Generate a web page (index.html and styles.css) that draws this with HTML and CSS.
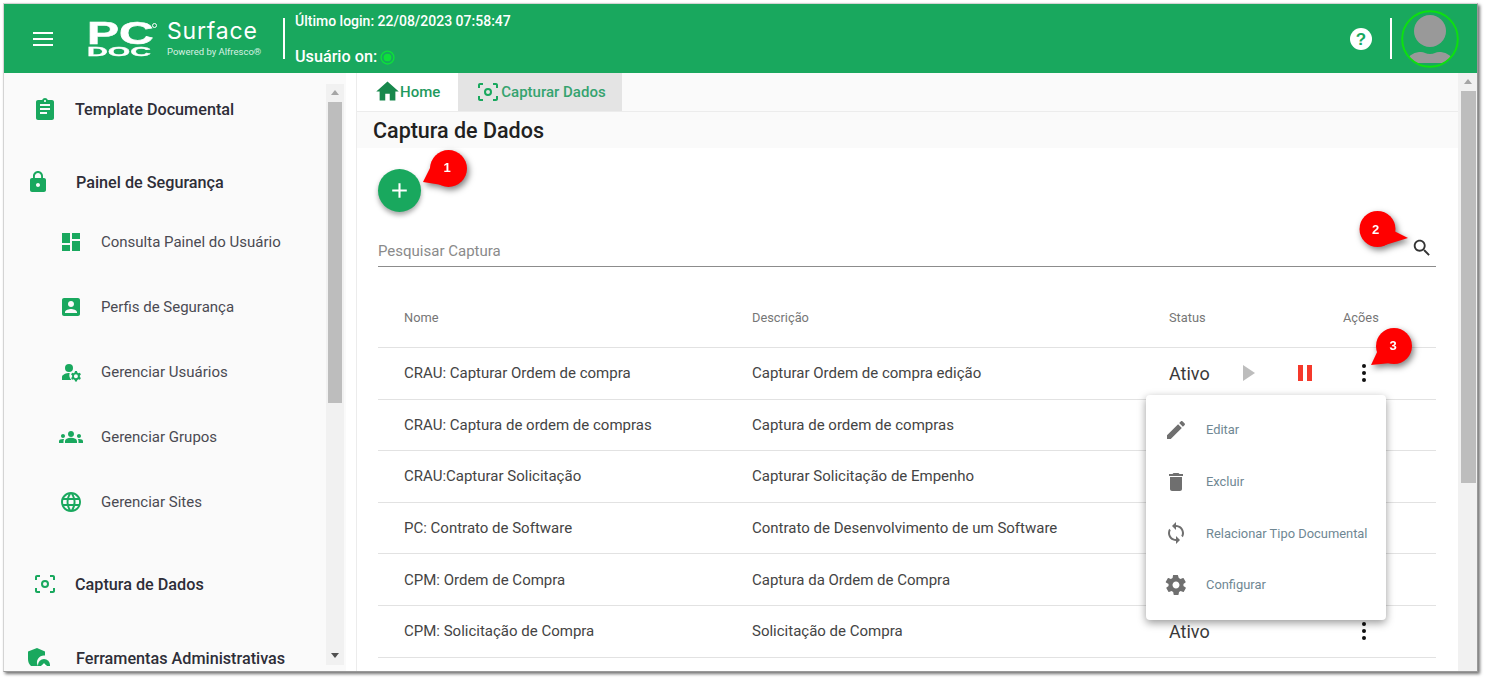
FILE: index.html
```html
<!DOCTYPE html>
<html lang="pt">
<head>
<meta charset="utf-8">
<title>Captura de Dados</title>
<link rel="stylesheet" href="styles.css">
</head>
<body>
<div class="frame">
  <header class="topbar">
    <svg class="burger" viewBox="0 0 20 14"><path d="M0 1h20M0 7h20M0 13h20" stroke="#fff" stroke-width="2"/></svg>
    <div class="logo">
      <div class="logo-pc"><span class="pc">PC</span><span class="doc">DOC</span><i class="reg"></i></div>
      <div class="logo-surface"><span class="surface">Surface</span><span class="powered">Powered by Alfresco®</span></div>
    </div>
    <div class="vsep"></div>
    <div class="session">
      <div class="login">Último login: 22/08/2023 07:58:47</div>
      <div class="online">Usuário on: <svg class="dot" viewBox="0 0 14 14"><circle cx="7" cy="7" r="6" fill="none" stroke="#0de03a" stroke-width="1.300"/><circle cx="7" cy="7" r="3.600" fill="#0de03a"/></svg></div>
    </div>
    <div class="spacer"></div>
    <svg class="help" viewBox="0 0 24 24"><circle cx="12" cy="12" r="11" fill="#fff"/><text x="12" y="18" text-anchor="middle" class="help-q">?</text></svg>
    <div class="vsep right"></div>
    <div class="avatar">
      <svg viewBox="0 0 58 58"><clipPath id="ac"><circle cx="29" cy="29" r="27.500"/></clipPath><g clip-path="url(#ac)" fill="#999"><circle cx="29" cy="21" r="16"/><path d="M5 53c2-9 10-11 15-11 3 0 5 2 9 2s6-2 9-2c5 0 13 2 15 11z"/></g><circle cx="29" cy="29" r="27.800" fill="none" stroke="#0de010" stroke-width="2"/></svg>
    </div>
  </header>
  <div class="body">
    <aside class="sidebar">
      <nav class="nav">
        <a class="nav-main first"><svg class="ic" viewBox="0 0 24 24"><path d="M19 3h-4.200C14.400 1.800 13.300 1 12 1s-2.400.8-2.800 2H5c-1.100 0-2 .9-2 2v16c0 1.100.9 2 2 2h14c1.100 0 2-.9 2-2V5c0-1.100-.9-2-2-2zm-7 0c.6 0 1 .4 1 1s-.4 1-1 1-1-.4-1-1 .4-1 1-1zm2 14H7v-2h7v2zm3-4H7v-2h10v2zm0-4H7V7h10v2z"/></svg><span>Template Documental</span></a>
        <a class="nav-main second"><svg class="ic lock" viewBox="0 0 24 24"><path d="M18 8h-1V6c0-2.800-2.200-5-5-5S7 3.200 7 6v2H6c-1.100 0-2 .9-2 2v10c0 1.100.9 2 2 2h12c1.100 0 2-.9 2-2V10c0-1.100-.9-2-2-2zm-6 9c-1.100 0-2-.9-2-2s.9-2 2-2 2 .9 2 2-.9 2-2 2zm3.100-9H8.900V6c0-1.700 1.400-3.100 3.100-3.100s3.100 1.400 3.100 3.100v2z"/></svg><span>Painel de Segurança</span></a>
        <a class="nav-sub sub-first"><svg class="ic" viewBox="0 0 24 24"><path d="M3 13h8V3H3v10zm0 8h8v-6H3v6zm10 0h8V11h-8v10zm0-18v6h8V3h-8z"/></svg><span>Consulta Painel do Usuário</span></a>
        <a class="nav-sub"><svg class="ic" viewBox="0 0 24 24"><path d="M3 5v14c0 1.100.9 2 2 2h14c1.100 0 2-.9 2-2V5c0-1.100-.9-2-2-2H5c-1.100 0-2 .9-2 2zm12 4c0 1.700-1.300 3-3 3s-3-1.300-3-3 1.300-3 3-3 3 1.300 3 3zm-9 8c0-2 4-3.100 6-3.100s6 1.100 6 3.100v1H6v-1z"/></svg><span>Perfis de Segurança</span></a>
        <a class="nav-sub"><svg class="ic" viewBox="0 0 24 24"><circle cx="10" cy="8" r="4"/><path d="M10.700 13C7.700 12.900 3 14.400 3 17v3h9.500a6.700 6.700 0 0 1-1.800-7z"/><path d="M20.800 17c0-.2.100-.4.100-.7s0-.5-.1-.7l1.100-1-1-1.800-1.500.5a5 5 0 0 0-1.200-.7l-.2-1.500h-2l-.3 1.500c-.4.200-.8.400-1.200.7l-1.400-.5-1 1.800 1.100 1c0 .2-.1.400-.1.700s0 .5.100.7l-1.100 1 1 1.800 1.400-.5c.4.300.8.500 1.200.7l.3 1.500h2l.2-1.500c.5-.2.900-.4 1.200-.7l1.500.5 1-1.800-1.100-1zM16.900 18.300a2 2 0 1 1 0-4 2 2 0 0 1 0 4z"/></svg><span>Gerenciar Usuários</span></a>
        <a class="nav-sub"><svg class="ic" viewBox="0 0 24 24"><path d="M12 12.800c1.600 0 3.100.4 4.300.9 1.100.5 1.700 1.600 1.700 2.700V18H6v-1.600c0-1.200.7-2.200 1.700-2.700 1.200-.5 2.700-.9 4.300-.9zM4 13c1.100 0 2-.9 2-2s-.9-2-2-2-2 .9-2 2 .9 2 2 2zm1.100 1.100c-.4-.1-.7-.1-1.100-.1-1 0-1.900.2-2.800.6C.5 14.900 0 15.600 0 16.400V18h4.500v-1.600c0-.8.200-1.600.6-2.300zM20 13c1.100 0 2-.9 2-2s-.9-2-2-2-2 .9-2 2 .9 2 2 2zm4 3.400c0-.8-.5-1.500-1.200-1.800-.9-.4-1.800-.6-2.800-.6-.4 0-.8 0-1.100.1.400.7.600 1.500.6 2.300V18H24v-1.600zM12 6c1.700 0 3 1.300 3 3s-1.300 3-3 3-3-1.300-3-3 1.300-3 3-3z"/></svg><span>Gerenciar Grupos</span></a>
        <a class="nav-sub"><svg class="ic" viewBox="0 0 24 24"><path d="M12 2C6.500 2 2 6.500 2 12s4.500 10 10 10 10-4.500 10-10S17.500 2 12 2zm6.900 6h-3c-.3-1.300-.8-2.400-1.400-3.600 1.800.6 3.400 1.900 4.400 3.600zM12 4c.8 1.200 1.500 2.500 1.900 4h-3.800c.4-1.500 1.100-2.800 1.900-4zM4.300 14c-.2-.6-.3-1.300-.3-2s.1-1.400.3-2h3.400c-.1.700-.1 1.300-.1 2s.1 1.300.1 2H4.300zm.8 2h3c.3 1.300.8 2.400 1.400 3.600-1.800-.6-3.400-1.900-4.400-3.600zm3-8h-3c1-1.700 2.600-3 4.400-3.600C8.900 5.600 8.400 6.700 8.100 8zM12 20c-.8-1.200-1.500-2.500-1.900-4h3.800c-.4 1.500-1.100 2.800-1.900 4zm2.300-6H9.700c-.1-.7-.2-1.300-.2-2s.1-1.300.2-2h4.700c.1.700.2 1.300.2 2s-.2 1.300-.3 2zm.3 5.600c.6-1.100 1.100-2.300 1.400-3.600h3c-1 1.700-2.600 3-4.400 3.600zm1.800-5.600c.1-.7.100-1.300.1-2s-.1-1.300-.1-2h3.400c.2.600.3 1.300.3 2s-.1 1.400-.3 2h-3.400z"/></svg><span>Gerenciar Sites</span></a>
        <a class="nav-main third"><svg class="ic" viewBox="0 0 24 24"><path d="M7 3H4c-1.100 0-2 .9-2 2v3h2V5h3V3zm13 0h-3v2h3v3h2V5c0-1.100-.9-2-2-2zM4 16H2v3c0 1.100.9 2 2 2h3v-2H4v-3zm16 3h-3v2h3c1.100 0 2-.9 2-2v-3h-2v3zM12 8a4 4 0 1 0 0 8 4 4 0 0 0 0-8zm0 6a2 2 0 1 1 0-4 2 2 0 0 1 0 4z"/></svg><span>Captura de Dados</span></a>
        <a class="nav-main fourth"><svg class="ic shield" viewBox="0 0 24 18"><path d="M11 0 2 3.500V11c0 3 1 5 3 7h7a7 7 0 0 1 7-10.500V3.500z"/><circle cx="18" cy="17" r="6"/><path d="M15.500 17h5v2h-5zM16.500 17c0-2 3-2 3 0" fill="#fff"/></svg><span>Ferramentas Administrativas</span></a>
      </nav>
      <div class="scroll side-scroll"><span class="arrow up"></span><span class="thumb"></span><span class="arrow down"></span></div>
    </aside>
    <main class="main">
      <div class="content">
        <div class="tabs">
          <a class="tab"><svg class="tab-ic home" viewBox="0 0 24 24"><path d="M10 20v-6h4v6h5v-8h3L12 3 2 12h3v8z"/></svg>Home</a>
          <a class="tab active"><svg class="tab-ic" viewBox="0 0 24 24"><path d="M7 3H4c-1.100 0-2 .9-2 2v3h2V5h3V3zm13 0h-3v2h3v3h2V5c0-1.100-.9-2-2-2zM4 16H2v3c0 1.100.9 2 2 2h3v-2H4v-3zm16 3h-3v2h3c1.100 0 2-.9 2-2v-3h-2v3zM12 8a4 4 0 1 0 0 8 4 4 0 0 0 0-8zm0 6a2 2 0 1 1 0-4 2 2 0 0 1 0 4z"/></svg>Capturar Dados</a>
        </div>
        <h1 class="title">Captura de Dados</h1>
        <div class="panel">
          <button class="fab"><svg viewBox="0 0 24 24"><path d="M19 13h-6v6h-2v-6H5v-2h6V5h2v6h6v2z" fill="#fff"/></svg></button>
          <div class="search">
            <span>Pesquisar Captura</span>
            <svg class="search-ic" viewBox="0 0 24 24"><path d="M15.500 14h-.8l-.3-.3c1-1.100 1.600-2.600 1.600-4.200C16 5.900 13.100 3 9.500 3S3 5.900 3 9.500 5.900 16 9.500 16c1.600 0 3.100-.6 4.200-1.600l.3.300v.8l5 5 1.500-1.500-5-5zm-6 0C7 14 5 12 5 9.500S7 5 9.500 5 14 7 14 9.500 12 14 9.500 14z"/></svg>
          </div>
          <div class="table">
            <div class="row head"><span>Nome</span><span>Descrição</span><span>Status</span><span>Ações</span></div>
            <div class="row"><span>CRAU: Capturar Ordem de compra</span><span>Capturar Ordem de compra edição</span><span class="status">Ativo
              <svg class="play" viewBox="0 0 12 16"><path d="M0 0l12 8-12 8z"/></svg>
              <svg class="pause" viewBox="0 0 14 16"><path d="M0 0h5v16H0zM9 0h5v16H9z"/></svg></span>
              <span class="acts"><svg class="kebab" viewBox="0 0 6 20"><circle cx="3" cy="3" r="2"/><circle cx="3" cy="10" r="2"/><circle cx="3" cy="17" r="2"/></svg></span></div>
            <div class="row"><span>CRAU: Captura de ordem de compras</span><span>Captura de ordem de compras</span><span></span><span></span></div>
            <div class="row"><span>CRAU:Capturar Solicitação</span><span>Capturar Solicitação de Empenho</span><span></span><span></span></div>
            <div class="row"><span>PC: Contrato de Software</span><span>Contrato de Desenvolvimento de um Software</span><span></span><span></span></div>
            <div class="row"><span>CPM: Ordem de Compra</span><span>Captura da Ordem de Compra</span><span></span><span></span></div>
            <div class="row"><span>CPM: Solicitação de Compra</span><span>Solicitação de Compra</span><span class="status">Ativo</span>
              <span class="acts"><svg class="kebab" viewBox="0 0 6 20"><circle cx="3" cy="3" r="2"/><circle cx="3" cy="10" r="2"/><circle cx="3" cy="17" r="2"/></svg></span></div>
          </div>
        </div>
      </div>
      <div class="scroll main-scroll"><span class="arrow up"></span><span class="thumb"></span></div>
    </main>
  </div>
</div>

<div class="menu">
  <div class="menu-item"><svg viewBox="0 0 24 24"><path d="M3 17.250V21h3.750L17.800 9.900l-3.700-3.700L3 17.250zM20.700 7c.4-.4.4-1 0-1.400l-2.300-2.300c-.4-.4-1-.4-1.400 0l-1.800 1.800 3.700 3.700L20.700 7z"/></svg><span>Editar</span></div>
  <div class="menu-item"><svg viewBox="0 0 24 24"><path d="M6 19c0 1.100.9 2 2 2h8c1.100 0 2-.9 2-2V7H6v12zM19 4h-3.500l-1-1h-5l-1 1H5v2h14V4z"/></svg><span>Excluir</span></div>
  <div class="menu-item"><svg viewBox="0 0 24 24"><path d="M12 4V1L8 5l4 4V6c3.300 0 6 2.700 6 6 0 1-.3 2-.7 2.800l1.500 1.500C19.500 15 20 13.600 20 12c0-4.400-3.600-8-8-8zm0 14c-3.300 0-6-2.700-6-6 0-1 .3-2 .7-2.800L5.200 7.700C4.500 9 4 10.400 4 12c0 4.400 3.600 8 8 8v3l4-4-4-4v3z"/></svg><span>Relacionar Tipo Documental</span></div>
  <div class="menu-item"><svg viewBox="0 0 24 24"><path d="M19.400 13c0-.3.100-.6.100-1s0-.7-.1-1l2.100-1.600c.2-.2.200-.4.100-.6l-2-3.500c-.1-.2-.4-.3-.6-.2l-2.500 1c-.5-.4-1.100-.7-1.700-1L14 2.400c0-.2-.2-.4-.5-.4h-4c-.3 0-.5.2-.5.400l-.4 2.700c-.6.200-1.100.6-1.700 1l-2.500-1c-.2-.1-.5 0-.6.200l-2 3.500c-.1.200-.1.500.1.600L4.600 11c0 .3-.1.600-.1 1s0 .7.100 1l-2.100 1.600c-.2.200-.2.400-.1.600l2 3.500c.1.200.4.300.6.200l2.500-1c.5.400 1.100.7 1.700 1l.4 2.700c0 .2.200.4.500.4h4c.3 0 .5-.2.500-.4l.4-2.700c.6-.2 1.100-.6 1.700-1l2.500 1c.2.100.5 0 .6-.2l2-3.500c.1-.2.100-.5-.1-.6L19.400 13zM12 15.500c-1.900 0-3.500-1.600-3.500-3.500s1.600-3.500 3.500-3.500 3.500 1.600 3.500 3.500-1.600 3.500-3.500 3.500z"/></svg><span>Configurar</span></div>
</div>

<svg class="callout c1" viewBox="0 0 50 42"><circle cx="28.500" cy="20.500" r="18.500"/><path d="M3 34 13 14 22 37z"/><text x="27" y="24" text-anchor="middle">1</text></svg>
<svg class="callout c2" viewBox="0 0 56 44"><circle cx="22.500" cy="21" r="18"/><path d="M37 22 53 30 27 38z"/><text x="20.500" y="26" text-anchor="middle">2</text></svg>
<svg class="callout c3" viewBox="0 0 50 46"><circle cx="28" cy="22" r="18"/><path d="M13 24 5 41 25 39z"/><text x="27" y="26" text-anchor="middle">3</text></svg>
</body>
</html>
```
FILE: styles.css
```css
* { box-sizing: border-box; }
html, body { margin: 0; height: 100%; background: #fff; overflow: hidden; }
body { font-family: Roboto, "Liberation Sans", sans-serif; color: #333; position: relative; }
a { text-decoration: none; color: inherit; }

.frame {
  width: 1475px; height: 669px; margin: 3px 0 0 3px;
  border: 1px solid #d4d4d4; border-right-color: #999; border-bottom-color: #999;
  box-shadow: 2px 2px 3px rgba(0,0,0,.55);
  display: flex; flex-direction: column; overflow: hidden; background: #fff;
}
.topbar {
  height: 69px; flex: none; background: #19a85e; color: #fff;
  display: flex; align-items: center; padding: 0 18px 0 29px;
}
.burger { width: 20px; height: 14px; flex: none; margin-right: 34px; }
.logo { display: flex; align-items: flex-start; align-self: flex-start; width: 196px; }
.logo-pc { width: 80px; padding-top: 17px; display: flex; flex-direction: column; font-family: "Liberation Sans", sans-serif; font-weight: 700; color: #fff; align-items: flex-start; position: relative; }
.pc { font-size: 32px; line-height: 24px; transform: scaleX(1.5); transform-origin: left; -webkit-text-stroke: .6px #fff; }
.doc { font-size: 12px; line-height: 12px; margin-top: 1px; transform: scaleX(2.4); transform-origin: left; -webkit-text-stroke: .3px #fff; }
.reg { position: absolute; left: 65px; top: 19px; width: 5px; height: 5px; border: 1px solid #fff; border-radius: 50%; }
.logo-surface { display: flex; flex-direction: column; padding-top: 14px; }
.surface { font-family: Inter, Lato, sans-serif; font-size: 23px; line-height: 26px; font-weight: 400; letter-spacing: .8px; }
.powered { font-size: 9.500px; line-height: 12px; margin-top: 2px; color: #d8f1e4; white-space: nowrap; }
.vsep { width: 2px; height: 41px; background: #fff; flex: none; margin-right: 10px; }
.session { font-weight: 500; align-self: flex-start; padding-top: 8px; }
.login { line-height: 18px; font-size: 14px; }
.online { line-height: 20px; margin-top: 17px; font-size: 16.200px; display: flex; align-items: center; gap: 3px; }
.dot { width: 15px; height: 15px; }
.spacer { flex: 1; }
.help { width: 24px; height: 24px; margin-right: 17px; }
.help-q { font: 700 17px "Liberation Sans", sans-serif; fill: #19a85e; }
.vsep.right { margin-right: 9px; }
.avatar { width: 58px; height: 58px; flex: none; }
.avatar svg { width: 58px; height: 58px; display: block; }

.body { flex: 1; display: flex; min-height: 0; }
.sidebar { width: 342px; flex: none; background: #fafafa; display: flex; padding-right: 2px; overflow: hidden; }
.nav { flex: 1; display: flex; flex-direction: column; min-width: 0; overflow: hidden; }
.nav-main, .nav-sub { display: flex; align-items: center; flex: none; height: 20px; }
.nav-main { font-size: 16.200px; font-weight: 500; color: #2e2e38; padding-left: 28px; }
.nav-sub { font-size: 15px; color: #4a4a52; padding-left: 55px; margin-top: 45px; }
.nav-sub.sub-first { margin-top: 40px; }
.nav-main.first { margin-top: 26px; }
.nav-main.second { margin-top: 53px; }
.nav-main.third { margin-top: 62px; }
.nav-main.fourth { margin-top: 54px; }
.ic { width: 24px; height: 24px; fill: #19a85e; flex: none; }
.nav-main .ic { margin-left: 1px; margin-right: 18px; }
.nav-sub .ic { margin-right: 18px; }
.nav-main.second .ic { margin-left: -6px; margin-right: 26px; }
.nav-main.fourth .ic { margin-left: -6px; margin-right: 26px; height: 18px; align-self: flex-start; }

.scroll { flex: none; display: flex; flex-direction: column; align-items: center; background: #f1f1f1; }
.main-scroll { width: 19px; height: 100%; border-left: 1px solid #f1f1f1; }
.side-scroll { width: 18px; height: 581px; margin-top: 11px; }
.thumb { width: 14px; background: #bdbdbd; flex: none; }
.side-scroll .thumb { height: 301px; }
.main-scroll .thumb { width: 15px; height: 392px; }
.arrow { width: 0; height: 0; border: 4px solid transparent; flex: none; }
.arrow.up { border-bottom: 5px solid #a5a5a5; border-top: 0; margin: 6px 0 7px; }
.arrow.down { border-top: 5px solid #505050; border-bottom: 0; margin-top: auto; margin-bottom: 7px; }

.main { flex: 1; display: flex; border-left: 1px solid #ececec; margin-left: 10px; min-width: 0; }
.content { flex: 1; min-width: 0; background: #fff; display: flex; flex-direction: column; }
.tabs { height: 39px; display: flex; flex: none; background: #fafafa; border-bottom: 1px solid #ececec; }
.tab { display: flex; align-items: center; font-size: 15px; font-weight: 500; color: #1f9a5e; padding: 0 18px 1px 17px; background: #fff; }
.tab.active { background: #e4e4e4; color: #35a36f; padding: 0 16px 1px 18px; }
.tab-ic { width: 24px; height: 24px; fill: #19a85e; margin-right: 1px; }
.tab-ic.home { width: 27px; height: 27px; fill: #17884c; margin-right: -1px; }
.title { margin: 0; height: 36px; flex: none; background: #fafafa; font-size: 21.500px; font-weight: 500; color: #212121; line-height: 37px; padding-left: 16px; }
.panel { padding: 19px 22px 0 21px; flex: 1; min-height: 0; overflow: hidden; }
.fab { width: 43px; height: 43px; border-radius: 50%; background: #19a85e; border: 0; padding: 9px; display: block; box-shadow: 0 3px 5px rgba(0,0,0,.35); margin-top: 2px; }
.fab svg { width: 25px; height: 25px; display: block; }
.search { height: 33px; margin-top: 22px; border-bottom: 1px solid #8c8c8c; display: flex; align-items: center; justify-content: space-between; font-size: 15px; color: #8a8a8a; padding-top: 1px; }
.search-ic { width: 22px; height: 22px; fill: #333; margin-top: -6px; margin-right: 3px; }
.table { margin-top: 29px; }
.row { display: grid; grid-template-columns: 348px 417px 174px 1fr; align-items: center; height: 51.600px; border-bottom: 1px solid #e2e2e2; padding-left: 26px; font-size: 15px; color: #444; }
.row.head { height: 52px; padding-bottom: 8px; font-size: 12.800px; color: #767676; }
.status { font-size: 18px; color: #3a3a3a; display: flex; align-items: center; }
.play { width: 12px; height: 16px; fill: #bdbdbd; margin-left: 33px; }
.pause { width: 14px; height: 16px; fill: #f5392b; margin-left: 43px; }
.acts { display: flex; padding-left: 17px; }
.kebab { width: 6px; height: 20px; fill: #111; margin-left: 1px; }

.menu {
  position: absolute; left: 1146px; top: 395px; width: 240px; height: 225px;
  background: #fff; border-radius: 4px; box-shadow: 0 3px 8px rgba(0,0,0,.4);
  padding: 9px 0 0; display: flex; flex-direction: column;
}
.menu-item { height: 51.700px; flex: none; display: flex; align-items: center; padding-left: 18px; font-size: 12.900px; color: #6f8793; }
.menu-item svg { width: 24px; height: 24px; fill: #6f6f6f; margin-right: 18px; flex: none; }

.callout { position: absolute; filter: drop-shadow(2px 3px 3px rgba(0,0,0,.5)); fill: #f00; }
.callout text { font: 700 13px "Liberation Sans", sans-serif; fill: #fff; }
.c1 { left: 420px; top: 148px; width: 50px; height: 42px; }
.c2 { left: 1355px; top: 208px; width: 56px; height: 44px; }
.c3 { left: 1366px; top: 324px; width: 50px; height: 46px; }
```
